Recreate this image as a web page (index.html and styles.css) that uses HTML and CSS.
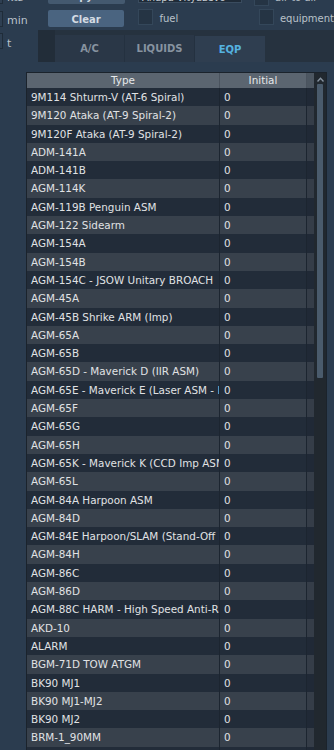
FILE: index.html
```
<!DOCTYPE html>
<html lang="en">
<head>
    <meta charset="UTF-8">
    <title>Loadout - EQP</title>
    <link rel="stylesheet" href="styles.css">
</head>
<body>

<div class="controls">
    <div class="row row-a">
        <span class="edge"></span>
        <span class="unit">kts</span>
        <button class="btn">Copy to</button>
        <span class="field">Anapa-Vityazevo</span>
        <label class="check"><span class="box"></span>air to air</label>
    </div>
    <div class="row row-b">
        <span class="edge"></span>
        <span class="unit">min</span>
        <button class="btn">Clear</button>
        <label class="check check-fuel"><span class="box"></span>fuel</label>
        <label class="check"><span class="box"></span>equipment</label>
    </div>
    <div class="row row-c">
        <span class="edge"></span>
        <span class="unit unit-t">t</span>
        <div class="tabbar">
            <span class="tab-lead"></span>
            <span class="tab">A/C</span>
            <span class="tab">LIQUIDS</span>
            <span class="tab active">EQP</span>
        </div>
    </div>
</div>

<div class="table-frame">
    <div class="grid">
        <div class="tr head">
            <div class="td">Type</div>
            <div class="td">Initial</div>
            <div class="td fill"></div>
        </div>
        <div class="tr"><div class="td">9M114 Shturm-V (AT-6 Spiral)</div><div class="td">0</div><div class="td fill"></div></div>
        <div class="tr"><div class="td">9M120 Ataka (AT-9 Spiral-2)</div><div class="td">0</div><div class="td fill"></div></div>
        <div class="tr"><div class="td">9M120F Ataka (AT-9 Spiral-2)</div><div class="td">0</div><div class="td fill"></div></div>
        <div class="tr"><div class="td">ADM-141A</div><div class="td">0</div><div class="td fill"></div></div>
        <div class="tr"><div class="td">ADM-141B</div><div class="td">0</div><div class="td fill"></div></div>
        <div class="tr"><div class="td">AGM-114K</div><div class="td">0</div><div class="td fill"></div></div>
        <div class="tr"><div class="td">AGM-119B Penguin ASM</div><div class="td">0</div><div class="td fill"></div></div>
        <div class="tr"><div class="td">AGM-122 Sidearm</div><div class="td">0</div><div class="td fill"></div></div>
        <div class="tr"><div class="td">AGM-154A</div><div class="td">0</div><div class="td fill"></div></div>
        <div class="tr"><div class="td">AGM-154B</div><div class="td">0</div><div class="td fill"></div></div>
        <div class="tr"><div class="td">AGM-154C - JSOW Unitary BROACH</div><div class="td">0</div><div class="td fill"></div></div>
        <div class="tr"><div class="td">AGM-45A</div><div class="td">0</div><div class="td fill"></div></div>
        <div class="tr"><div class="td">AGM-45B Shrike ARM (Imp)</div><div class="td">0</div><div class="td fill"></div></div>
        <div class="tr"><div class="td">AGM-65A</div><div class="td">0</div><div class="td fill"></div></div>
        <div class="tr"><div class="td">AGM-65B</div><div class="td">0</div><div class="td fill"></div></div>
        <div class="tr"><div class="td">AGM-65D - Maverick D (IIR ASM)</div><div class="td">0</div><div class="td fill"></div></div>
        <div class="tr"><div class="td">AGM-65E - Maverick E (Laser ASM - L</div><div class="td">0</div><div class="td fill"></div></div>
        <div class="tr"><div class="td">AGM-65F</div><div class="td">0</div><div class="td fill"></div></div>
        <div class="tr"><div class="td">AGM-65G</div><div class="td">0</div><div class="td fill"></div></div>
        <div class="tr"><div class="td">AGM-65H</div><div class="td">0</div><div class="td fill"></div></div>
        <div class="tr"><div class="td">AGM-65K - Maverick K (CCD Imp ASM</div><div class="td">0</div><div class="td fill"></div></div>
        <div class="tr"><div class="td">AGM-65L</div><div class="td">0</div><div class="td fill"></div></div>
        <div class="tr"><div class="td">AGM-84A Harpoon ASM</div><div class="td">0</div><div class="td fill"></div></div>
        <div class="tr"><div class="td">AGM-84D</div><div class="td">0</div><div class="td fill"></div></div>
        <div class="tr"><div class="td">AGM-84E Harpoon/SLAM (Stand-Off L</div><div class="td">0</div><div class="td fill"></div></div>
        <div class="tr"><div class="td">AGM-84H</div><div class="td">0</div><div class="td fill"></div></div>
        <div class="tr"><div class="td">AGM-86C</div><div class="td">0</div><div class="td fill"></div></div>
        <div class="tr"><div class="td">AGM-86D</div><div class="td">0</div><div class="td fill"></div></div>
        <div class="tr"><div class="td">AGM-88C HARM - High Speed Anti-Ra</div><div class="td">0</div><div class="td fill"></div></div>
        <div class="tr"><div class="td">AKD-10</div><div class="td">0</div><div class="td fill"></div></div>
        <div class="tr"><div class="td">ALARM</div><div class="td">0</div><div class="td fill"></div></div>
        <div class="tr"><div class="td">BGM-71D TOW ATGM</div><div class="td">0</div><div class="td fill"></div></div>
        <div class="tr"><div class="td">BK90 MJ1</div><div class="td">0</div><div class="td fill"></div></div>
        <div class="tr"><div class="td">BK90 MJ1-MJ2</div><div class="td">0</div><div class="td fill"></div></div>
        <div class="tr"><div class="td">BK90 MJ2</div><div class="td">0</div><div class="td fill"></div></div>
        <div class="tr"><div class="td">BRM-1_90MM</div><div class="td">0</div><div class="td fill"></div></div>
        <div class="tr"><div class="td"></div><div class="td"></div><div class="td fill"></div></div>
    </div>
    <div class="scrollbar">
        <svg class="arrow" width="7" height="5" viewBox="0 0 7 5"><path d="M0.5 4.5 L3.5 1.2 L6.5 4.5" fill="none" stroke="#8793a0" stroke-width="1.4"/></svg>
        <div class="thumb"></div>
    </div>
</div>

</body>
</html>
```

FILE: styles.css
```
body { margin: 0; background: #2b3c4f; font-family: "DejaVu Sans", sans-serif; font-size: 10.4px; color: #e0e2e4; overflow: hidden; height: 750px; }

.controls { margin-top: -13px; }
.row { display: flex; align-items: center; }
.row-a { height: 17px; }
.row-b { height: 17px; margin-top: 6px; }
.row-c { height: 32px; margin-top: 3px; align-items: stretch; }
.edge { width: 2px; height: 14px; border: 1px solid #1f2c39; border-left: none; background: #2e3f52; }
.row-c .edge { align-self: flex-start; margin-top: 3px; }
.unit { width: 41px; margin-left: 4px; padding-top: 4px; color: #b9c1c9; font-size: 11px; }
.unit-t { margin-top: 3px; width: 31px; }

.btn { width: 77px; height: 17px; padding: 2px 0 0; border: none; border-radius: 2px; background: #4a6480; color: #d3dbe3; font-family: "DejaVu Sans", sans-serif; font-size: 10px; font-weight: bold; }
.row-a .btn { background: #44596f; }
.field { width: 104px; height: 15px; margin-left: 13px; border: 1px solid #3a4c5f; background: #1f2b38; color: #c8ced4; font-size: 10px; padding: 2px 0 0 3px; box-sizing: border-box; line-height: 13px; }
.check { display: flex; align-items: center; gap: 6px; margin-left: 12px; color: #b9c1c9; font-size: 10px; }
.row-a .check { padding-top: 4px; }
.check-fuel { margin-left: 14px; width: 109px; }
.box { width: 13px; height: 14px; border: 1px solid #34475a; background: #253444; }
.row-b .box { margin-top: -3px; }

.tabbar { flex: 1; display: flex; align-items: flex-end; background: #26323f; }
.tab-lead { width: 17px; align-self: stretch; background: #222d39; }
.tab { width: 70px; height: 27px; display: flex; align-items: center; justify-content: center; background: #2a3747; border-right: 1px solid #243140; box-sizing: border-box; color: #8793a0; font-size: 10px; font-weight: bold; }
.tab.active { background: #2f3e50; color: #55b3e0; border-right: none; height: 26px; }

.table-frame { display: flex; width: 301px; margin: 10px 0 0 26px; border: 1px solid #1b232c; border-bottom: none; height: 700px; box-sizing: border-box; }
.grid { width: 288px; overflow: hidden; }
.tr { display: grid; grid-template-columns: 193px 87px 8px; height: 18.3px; background: #222c39; }
.tr:nth-child(odd) { background: #38414c; }
.td { padding-left: 4px; line-height: 18px; white-space: nowrap; overflow: hidden; border-right: 1px solid #1c2530; }
.td.fill { padding: 0; border-right: none; background: rgba(0, 0, 0, 0.05); }
.tr.head { height: 15px; background: #5b6570; color: #e6e8ea; }
.head .td { padding: 0; text-align: center; line-height: 15px; border-right: 1px solid #4a535e; }
.head .td.fill { background: #4c5661; border-right: none; }

.scrollbar { width: 12px; background: #21282f; display: flex; flex-direction: column; align-items: center; }
.arrow { margin-top: 4px; }
.thumb { width: 6px; height: 294px; margin-top: 2px; background: #4a5b6c; border-radius: 1px; }
```
